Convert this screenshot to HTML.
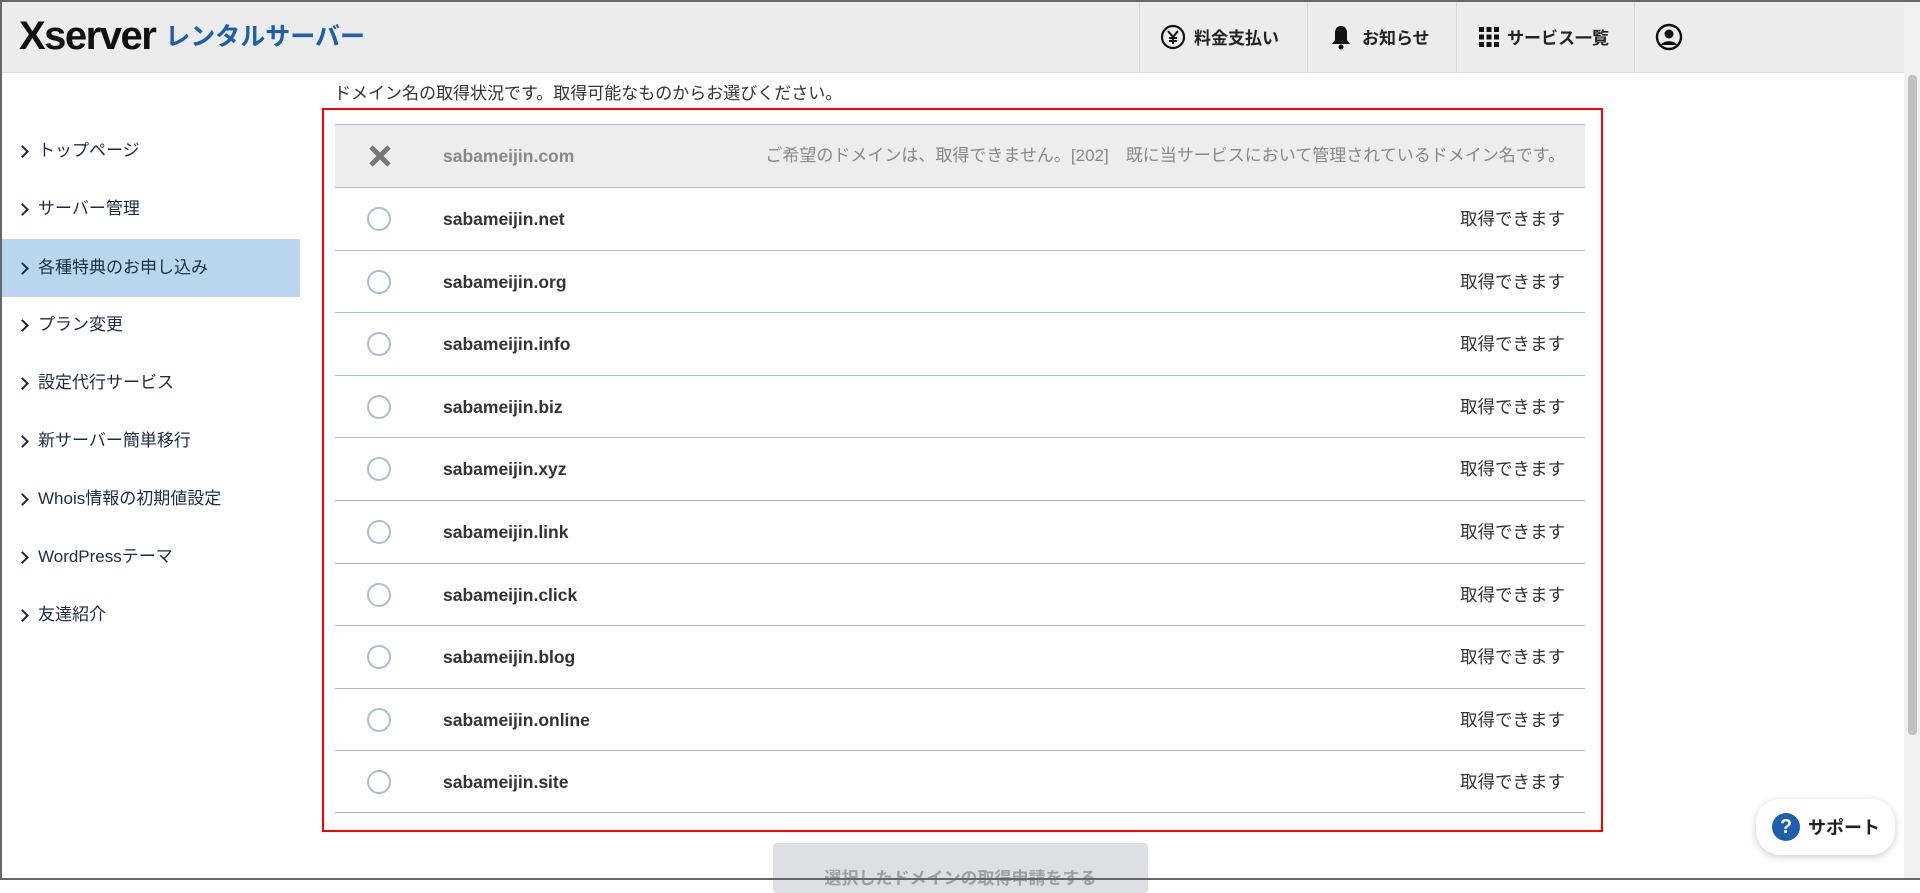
<!DOCTYPE html>
<html><head><meta charset="utf-8"><style>
*{box-sizing:border-box;margin:0;padding:0}
body{width:1920px;height:880px;overflow:hidden;background:#fff;font-family:"Liberation Sans","Noto Sans CJK JP",sans-serif;position:relative;color:#333}
.frame{position:absolute;inset:0;border:2px solid #666;border-right:none;pointer-events:none;z-index:9}
.hdr{position:absolute;left:0;top:0;width:1904px;height:73px;background:#ececec;border-bottom:1px solid #ddd}
.logo{position:absolute;left:19px;top:14px;font-size:40px;font-weight:bold;color:#111;letter-spacing:-1.5px;white-space:nowrap}
.logo span{font-size:25px;color:#1c5fae;margin-left:10px;letter-spacing:0;vertical-align:4px}
.nav{position:absolute;top:0;height:73px;border-left:1px solid #d6d6d6;display:flex;align-items:center;font-size:17px;font-weight:bold;color:#222}
.sb{position:absolute;left:0;top:73px;width:300px}
.si{position:absolute;left:0;width:300px;height:58px;font-size:17px;color:#1a2c48;line-height:58px;padding-left:38px}
.si:before{content:"";position:absolute;left:18px;top:25px;width:7px;height:7px;border-right:2px solid #1a2c48;border-top:2px solid #1a2c48;transform:rotate(45deg)}
.si.act{background:#bad6ef}
.intro{position:absolute;left:334px;top:79px;font-size:17px;color:#333}
.box{position:absolute;left:322px;top:108px;width:1281px;height:724px;border:2px solid #f00}
.row{position:absolute;left:335px;width:1250px;height:62.6px;border-top:1px solid #a7bdd5}
.row .c{position:absolute;left:32px;top:19px;width:24px;height:24px;border:2px solid #a9bed3;border-radius:50%}
.row .d{position:absolute;left:108px;top:0;line-height:62px;font-size:17.5px;font-weight:bold;color:#333}
.row .s{position:absolute;right:20px;top:0;line-height:62px;font-size:17.5px;color:#333}
.row.ng{background:#ededed}
.row.ng .d{color:#888}.row.ng .s{color:#888;font-size:17px}
.btn{position:absolute;left:773px;top:843px;width:375px;height:50px;background:#dcdfe3;border-radius:4px;color:#9aa0a6;font-weight:bold;font-size:17px;text-align:center;padding-top:21px}
.sup{position:absolute;left:1756px;top:799px;width:139px;height:56px;background:#fff;border-radius:24px;box-shadow:0 2px 8px rgba(0,0,0,.2);display:flex;align-items:center;padding-left:16px;font-weight:bold;font-size:18px;color:#222}
.sup i{display:inline-block;width:28px;height:28px;border-radius:50%;background:#1c5fae;color:#fff;font-style:normal;text-align:center;line-height:28px;font-size:20px;margin-right:8px}
.scroll{position:absolute;right:0;top:0;width:16px;height:880px;background:#f1f1f1}
.thumb{position:absolute;right:3px;top:75px;width:9px;height:660px;background:#c1c1c1;border-radius:4px}
</style></head><body>
<div class="hdr">
<div class="logo">Xserver<span>レンタルサーバー</span></div>
<div class="nav" style="left:1139px;width:168px;padding-left:20px"><svg width="26" height="26" viewBox="0 0 26 26" style="margin-right:8px"><circle cx="13" cy="13" r="11" fill="none" stroke="#111" stroke-width="2.2"/><path d="M8 7l5 6 5-6M13 13v7M9 14h8M9 17h8" stroke="#111" stroke-width="2" fill="none"/></svg>料金支払い</div>
<div class="nav" style="left:1307px;width:149px;padding-left:22px"><svg width="22" height="26" viewBox="0 0 22 26" style="margin-right:10px"><path d="M11 2c-4 0-6 3-6 7v7l-3 4h18l-3-4V9c0-4-2-7-6-7z" fill="#111"/><circle cx="11" cy="23" r="2.5" fill="#111"/></svg>お知らせ</div>
<div class="nav" style="left:1456px;width:178px;padding-left:22px"><svg width="20" height="20" viewBox="0 0 20 20" style="margin-right:8px" fill="#111"><rect x="0" y="0" width="5" height="5"/><rect x="7.5" y="0" width="5" height="5"/><rect x="15" y="0" width="5" height="5"/><rect x="0" y="7.5" width="5" height="5"/><rect x="7.5" y="7.5" width="5" height="5"/><rect x="15" y="7.5" width="5" height="5"/><rect x="0" y="15" width="5" height="5"/><rect x="7.5" y="15" width="5" height="5"/><rect x="15" y="15" width="5" height="5"/></svg>サービス一覧</div>
<div class="nav" style="left:1634px;width:270px;padding-left:20px"><svg width="28" height="28" viewBox="0 0 28 28"><circle cx="14" cy="14" r="12" fill="none" stroke="#111" stroke-width="2.4"/><circle cx="14" cy="11" r="4.5" fill="#111"/><path d="M6 22c2-5 14-5 16 0" fill="#111"/></svg></div>
</div>
<div class="sb">
<div class="si" style="top:49px">トップページ</div>
<div class="si" style="top:107px">サーバー管理</div>
<div class="si act" style="top:166px">各種特典のお申し込み</div>
<div class="si" style="top:223px">プラン変更</div>
<div class="si" style="top:281px">設定代行サービス</div>
<div class="si" style="top:339px">新サーバー簡単移行</div>
<div class="si" style="top:397px">Whois情報の初期値設定</div>
<div class="si" style="top:455px">WordPressテーマ</div>
<div class="si" style="top:513px">友達紹介</div>
</div>
<div class="intro">ドメイン名の取得状況です。取得可能なものからお選びください。</div>
<div class="box"></div>
<div class="row ng" style="top:124px"><svg style="position:absolute;left:33px;top:19px" width="24" height="24" viewBox="0 0 24 24"><path d="M3 3L21 21M21 3L3 21" stroke="#777" stroke-width="5"/></svg><span class="d">sabameijin.com</span><span class="s">ご希望のドメインは、取得できません。[202]　既に当サービスにおいて管理されているドメイン名です。</span></div>
<div class="row" style="top:187px"><span class="c"></span><span class="d">sabameijin.net</span><span class="s">取得できます</span></div>
<div class="row" style="top:249.6px"><span class="c"></span><span class="d">sabameijin.org</span><span class="s">取得できます</span></div>
<div class="row" style="top:312.2px"><span class="c"></span><span class="d">sabameijin.info</span><span class="s">取得できます</span></div>
<div class="row" style="top:374.8px"><span class="c"></span><span class="d">sabameijin.biz</span><span class="s">取得できます</span></div>
<div class="row" style="top:437.4px"><span class="c"></span><span class="d">sabameijin.xyz</span><span class="s">取得できます</span></div>
<div class="row" style="top:500px"><span class="c"></span><span class="d">sabameijin.link</span><span class="s">取得できます</span></div>
<div class="row" style="top:562.6px"><span class="c"></span><span class="d">sabameijin.click</span><span class="s">取得できます</span></div>
<div class="row" style="top:625.2px"><span class="c"></span><span class="d">sabameijin.blog</span><span class="s">取得できます</span></div>
<div class="row" style="top:687.8px"><span class="c"></span><span class="d">sabameijin.online</span><span class="s">取得できます</span></div>
<div class="row" style="top:750.4px;border-bottom:1px solid #a7bdd5"><span class="c"></span><span class="d">sabameijin.site</span><span class="s">取得できます</span></div>
<div class="btn">選択したドメインの取得申請をする</div>
<div class="sup"><i>?</i>サポート</div>
<div class="scroll"><div class="thumb"></div></div>
<div class="frame"></div>
</body></html>
